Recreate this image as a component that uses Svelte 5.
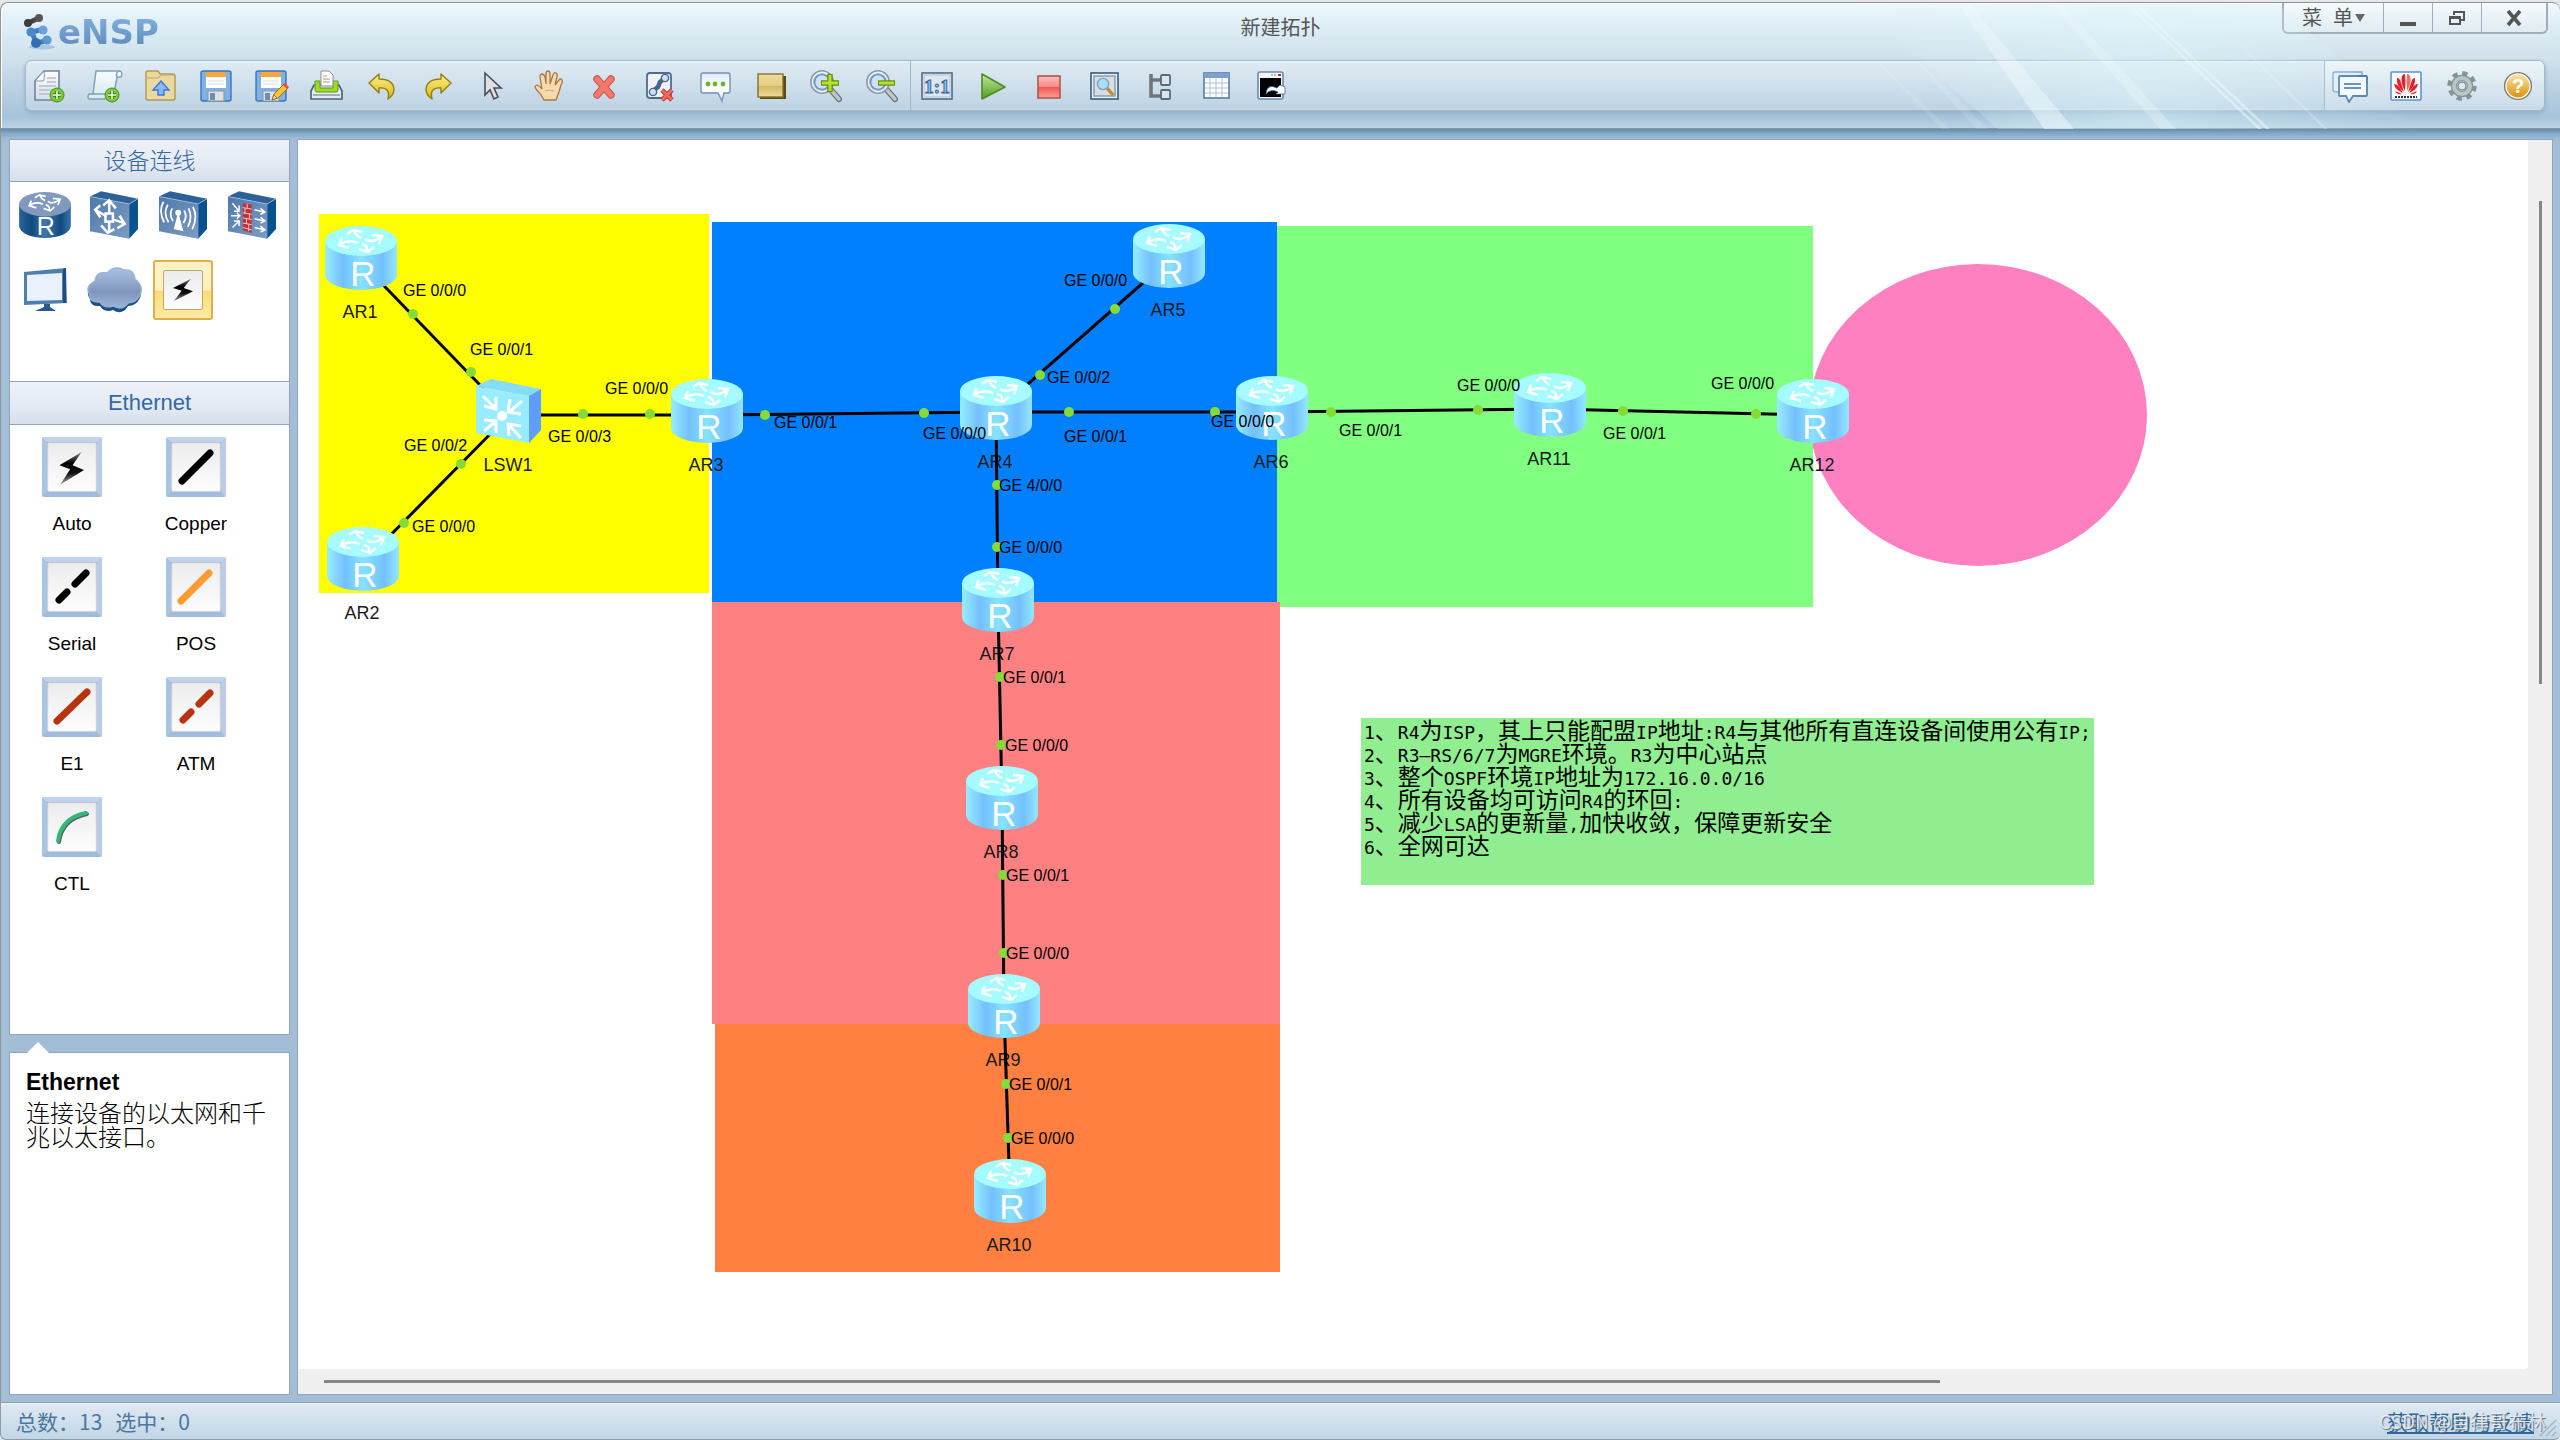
<script>
  const editTools = [
    ['newTopo', '新建拓扑'],
    ['newPaper', '新建试卷'],
    ['open', '打开'],
    ['save', '保存'],
    ['saveAs', '另存为'],
    ['print', '打印'],
    ['undo', '撤销'],
    ['redo', '重做'],
    ['select', '选择'],
    ['hand', '拖动'],
    ['delete', '删除'],
    ['deleteLink', '删除连线'],
    ['comment', '添加描述'],
    ['palette', '添加图形'],
    ['zoomIn', '放大'],
    ['zoomOut', '缩小']
  ];
  const runTools = [
    ['reset', '原始大小'],
    ['start', '启动设备'],
    ['stop', '停止设备'],
    ['capture', '数据抓包'],
    ['tree', '设备树'],
    ['grid', '显示网格'],
    ['console', '打开命令行']
  ];
  const helpTools = [
    ['forum', '论坛'],
    ['huawei', '官网'],
    ['settings', '选项'],
    ['help', '帮助']
  ];

  const devices = [
    ['router', '路由器'],
    ['switch', '交换机'],
    ['wlan', '无线局域网'],
    ['firewall', '防火墙'],
    ['terminal', '终端'],
    ['cloud', '其他设备'],
    ['link', '设备连线']
  ];
  let device = 'link';

  const cables = ['Auto', 'Copper', 'Serial', 'POS', 'E1', 'ATM', 'CTL'];

  // zones painted behind the devices
  const zones = [
    { x: 319, y: 214, w: 390, h: 379, fill: '#ffff00' },
    { x: 712, y: 222, w: 565, h: 380, fill: '#0080ff' },
    { x: 1277, y: 226, w: 536, h: 381, fill: '#80ff80' },
    { x: 712, y: 602, w: 568, h: 422, fill: '#ff8080' },
    { x: 715, y: 1024, w: 565, h: 248, fill: '#ff8040' }
  ];

  const nodes = {
    AR1: [361, 258],
    AR2: [363, 559],
    LSW1: [509, 411],
    AR3: [707, 411],
    AR4: [996, 408],
    AR5: [1169, 256],
    AR6: [1272, 408],
    AR7: [998, 600],
    AR8: [1002, 798],
    AR9: [1004, 1006],
    AR10: [1010, 1191],
    AR11: [1550, 405],
    AR12: [1813, 411]
  };

  // each end: port name, dot x, dot y, label left, label middle
  const links = [
    { a: 'AR1', b: 'LSW1', ends: [['0/0/0', 413, 314, 403, 290], ['0/0/1', 471, 372, 470, 349]] },
    { a: 'AR2', b: 'LSW1', ends: [['0/0/0', 404, 523, 412, 526], ['0/0/2', 461, 464, 404, 445]] },
    { a: 'LSW1', b: 'AR3', ends: [['0/0/3', 583, 414, 548, 436], ['0/0/0', 650, 414, 605, 388]] },
    { a: 'AR3', b: 'AR4', ends: [['0/0/1', 765, 415, 774, 422], ['0/0/0', 924, 413, 923, 433]] },
    { a: 'AR4', b: 'AR5', ends: [['0/0/2', 1040, 375, 1047, 377], ['0/0/0', 1115, 309, 1064, 280]] },
    { a: 'AR4', b: 'AR6', ends: [['0/0/1', 1069, 412, 1064, 436], ['0/0/0', 1215, 412, 1211, 421]] },
    { a: 'AR4', b: 'AR7', ends: [['4/0/0', 997, 485, 999, 485], ['0/0/0', 997, 547, 999, 547]] },
    { a: 'AR6', b: 'AR11', ends: [['0/0/1', 1331, 412, 1339, 430], ['0/0/0', 1478, 410, 1457, 385]] },
    { a: 'AR11', b: 'AR12', ends: [['0/0/1', 1623, 411, 1603, 433], ['0/0/0', 1756, 414, 1711, 383]] },
    { a: 'AR7', b: 'AR8', ends: [['0/0/1', 1000, 677, 1003, 677], ['0/0/0', 1001, 745, 1005, 745]] },
    { a: 'AR8', b: 'AR9', ends: [['0/0/1', 1003, 875, 1006, 875], ['0/0/0', 1004, 953, 1006, 953]] },
    { a: 'AR9', b: 'AR10', ends: [['0/0/1', 1006, 1084, 1009, 1084], ['0/0/0', 1008, 1138, 1011, 1138]] }
  ];

  const notes = [
    '1、R4为ISP，其上只能配盟IP地址:R4与其他所有直连设备间使用公有IP;',
    '2、R3–RS/6/7为MGRE环境。R3为中心站点',
    '3、整个OSPF环境IP地址为172.16.0.0/16',
    '4、所有设备均可访问R4的环回:',
    '5、减少LSA的更新量,加快收敛，保障更新安全',
    '6、全网可达'
  ];

  // latin runs are set in a smaller monospace face
  function runs(line) {
    return line.match(/[\x20-\x7e–]+|[^\x20-\x7e–]+/g);
  }
  function isLatin(text) {
    return /^[\x20-\x7e–]/.test(text);
  }
</script>

{#snippet plus(cx, cy)}
  <circle {cx} {cy} r="7" fill="#7ccb3c" stroke="#3f8f1d" />
  <path d="M{cx - 4} {cy}h8M{cx} {cy - 4}v8" stroke="#2f6f12" stroke-width="3.4" />
  <path d="M{cx - 4} {cy}h8M{cx} {cy - 4}v8" stroke="#f3ffe6" stroke-width="1.6" />
{/snippet}

{#snippet arrows()}
  <g fill="none" stroke="#fff" stroke-width="2.4">
    <path d="M36 12Q31 10 29 5M22 8L28 4L37 6" />
    <path d="M40 13Q46 18 56 11M47 9L57 10L54 18" />
    <path d="M37 18Q43 19 42 25M34 23L43 26L49 21" />
    <path d="M33 17Q24 13 15 18M17 12L14 19L24 22" />
  </g>
{/snippet}

{#snippet floppy()}
  <rect x="3" y="3" width="30" height="30" rx="2" fill="#7fb0e6" stroke="#3f74b4" stroke-width="1.4" />
  <rect x="8" y="4" width="20" height="16" fill="#fff" />
  <rect x="8" y="4" width="20" height="5" fill="#f7a63a" />
  <path d="M10 13h16M10 16h16" stroke="#d5dbe2" />
  <rect x="10" y="23" width="16" height="10" fill="#dfe2e4" stroke="#8a96a3" />
  <rect x="12" y="25" width="5" height="7" fill="#6f8db0" />
{/snippet}

{#snippet lens()}
  <path d="M22 21L31 31" stroke="#6e7378" stroke-width="6" stroke-linecap="round" />
  <path d="M22 21L31 31" stroke="#c3c6c9" stroke-width="3.4" stroke-linecap="round" />
  <circle cx="14" cy="14" r="10" fill="#dceaf6" stroke="#8e9ba8" stroke-width="4" />
  <circle cx="14" cy="14" r="9.6" fill="none" stroke="#eef2f5" stroke-width="1.6" />
  <circle cx="14" cy="14" r="7.4" fill="#cfe2f4" stroke="#5b94d0" stroke-width="1.4" />
{/snippet}

{#snippet toolIcon(name)}
  <svg width="36" height="36" viewBox="0 0 36 36" aria-hidden="true">
    {#if name === 'newTopo'}
      <path d="M13 3H28V32H4V13Z" fill="url(#paper)" stroke="#6d83a3" stroke-width="1.6" />
      <path d="M13 3Q14 11 12 13Q9 13 4 13Z" fill="#fafafa" stroke="#8191a6" />
      <path d="M16 10h9M16 14h9M8 18h17M8 22h14M8 26h10" stroke="#b3bfd0" stroke-width="1.6" />
      {@render plus(26, 27)}
    {:else if name === 'newPaper'}
      <path d="M9 3H33Q36 4 34 9H30L26 31H2Q0 29 2 26H6Z" fill="url(#paper2)" stroke="#7fa3b8" stroke-width="1.5" />
      <path d="M30 9Q28 4 33 3M6 26H19" fill="none" stroke="#7fa3b8" stroke-width="1.5" />
      {@render plus(25, 27)}
    {:else if name === 'open'}
      <path d="M4 5Q4 3 6 3H16L18 6H31Q33 6 33 8V30Q33 32 31 32H6Q4 32 4 30Z" fill="#e9d9a0" stroke="#b49a4f" stroke-width="1.4" />
      <path d="M5 10H16L19 7H32" fill="none" stroke="#c6ad63" />
      <path d="M19 13L27 22H22V27H16V22H11Z" fill="#8ab8fa" stroke="#3e77d6" stroke-width="1.4" />
    {:else if name === 'save'}
      {@render floppy()}
    {:else if name === 'saveAs'}
      {@render floppy()}
      <path d="M19 32L21 26L31 16L35 20L25 30Z" fill="#f8c52e" stroke="#a36d17" />
      <path d="M30 17L32 15L36 19L34 21Z" fill="#e4503c" />
      <path d="M19 32L21 27L24 30Z" fill="#f4ddc0" stroke="#7a4f22" stroke-width="0.6" />
    {:else if name === 'print'}
      <path d="M5 17H30L33 23V31H2V23Z" fill="#e6eaec" stroke="#4f6278" stroke-width="1.7" />
      <path d="M6 13H11V20H24V13H29V22Q29 24 27 24H8Q6 24 6 22Z" fill="#9adb2c" stroke="#5c9a14" />
      <path d="M12 3H20L24 7V18H12Z" fill="#fff" stroke="#8d8d8d" />
      <path d="M14 8h4M14 11h7M14 14h7" stroke="#999" />
      <path d="M4 27h27" stroke="#8fa0b0" stroke-width="1.6" />
    {:else if name === 'undo' || name === 'redo'}
      <path
        d="M5 15L15 6V11Q29 11 30 21Q30 27 24 31Q27 19 15 20V25Z"
        fill="url(#gold)"
        stroke="#93800c"
        stroke-width="1.4"
        stroke-linejoin="round"
        transform={name === 'redo' ? 'translate(36 0) scale(-1 1)' : null}
      />
    {:else if name === 'select'}
      <path d="M10 5V27L15 22L19 31L23 29L19 20H26Z" fill="#dfe1e4" stroke="#4b4f55" stroke-width="1.6" />
    {:else if name === 'hand'}
      <path
        d="M13 32Q10 26 5 21Q3 18 6 17Q9 18 11 21L9 9Q9 6 11 6Q13 6 14 9L15 16V6Q15 3 17 3Q19 3 19 6V16L22 7Q23 4 25 5Q27 6 26 9L24 17L28 12Q30 10 31 12Q32 14 30 17Q28 25 25 32Z"
        fill="#f8d9ae"
        stroke="#a97a40"
        stroke-width="1.3"
      />
      <path d="M14 23Q18 21 23 23" fill="none" stroke="#d8a86e" />
    {:else if name === 'delete'}
      <path d="M11 11L25 27M25 11L11 27" stroke="#c9574f" stroke-width="7.4" stroke-linecap="round" />
      <path d="M11 11L25 27M25 11L11 27" stroke="#f4776b" stroke-width="5.4" stroke-linecap="round" />
    {:else if name === 'deleteLink'}
      <rect x="5" y="5" width="24" height="25" rx="3" fill="#eef2f6" stroke="#4f6b92" stroke-width="1.8" />
      <path d="M11 23L16 19L18 14L23 10" fill="none" stroke="#46648f" stroke-width="4.6" stroke-linejoin="round" />
      <circle cx="11" cy="24" r="3.6" fill="#cfe0f4" stroke="#46648f" stroke-width="1.4" />
      <circle cx="23" cy="10" r="3.6" fill="#cfe0f4" stroke="#46648f" stroke-width="1.4" />
      <path d="M20 22L30 32M30 22L20 32" stroke="#c63a30" stroke-width="4.6" />
      <path d="M20 22L30 32M30 22L20 32" stroke="#f06a5e" stroke-width="2.6" />
    {:else if name === 'comment'}
      <path d="M6 5H31Q33 5 33 7V23Q33 25 31 25H27L25 33L21 25H6Q4 25 4 23V7Q4 5 6 5Z" fill="url(#bubble)" stroke="#7691b8" stroke-width="1.4" />
      <g fill="#6fb42c"><circle cx="11" cy="16" r="2.4" /><circle cx="18" cy="16" r="2.4" /><circle cx="26" cy="16" r="2.4" /></g>
    {:else if name === 'palette'}
      <path d="M7 8H33V31H7Z" fill="#5c4a14" />
      <rect x="5" y="6" width="25" height="23" fill="url(#sand)" stroke="#84702d" stroke-width="1.4" />
    {:else if name === 'zoomIn' || name === 'zoomOut'}
      {@render lens()}
      {#if name === 'zoomIn'}
        <path d="M13 15H31M22 6V24" stroke="#5d8e0c" stroke-width="5.4" />
        <path d="M14 15H30M22 7V23" stroke="#b9e227" stroke-width="3" />
      {:else}
        <path d="M14 15H31" stroke="#5d8e0c" stroke-width="5.4" />
        <path d="M15 15H30" stroke="#b9e227" stroke-width="3" />
      {/if}
    {:else if name === 'reset'}
      <rect x="3" y="5" width="30" height="26" fill="#f2f5f8" stroke="#4d6a8b" stroke-width="1.6" />
      <rect x="5" y="7" width="26" height="22" fill="#dfe7ee" stroke="#a9bacb" />
      <text x="18" y="25" class="one">1:1</text>
    {:else if name === 'start'}
      <path d="M7 6L30 19L7 31Z" fill="url(#play)" stroke="#4f8b22" stroke-width="1.6" stroke-linejoin="round" />
    {:else if name === 'stop'}
      <rect x="7" y="8" width="22" height="22" fill="url(#stop)" stroke="#b5544f" stroke-width="1.6" />
    {:else if name === 'capture'}
      <rect x="5" y="5" width="27" height="26" fill="#eaf1f7" stroke="#4b6a8d" stroke-width="1.8" />
      <rect x="8" y="8" width="21" height="20" fill="#d9dee2" stroke="#8497aa" stroke-width="1.4" />
      <path d="M21 20L27 27" stroke="#c78a2a" stroke-width="3.4" />
      <circle cx="17" cy="16" r="5.6" fill="#a9dcf8" stroke="#7aa3c0" stroke-width="1.4" />
    {:else if name === 'tree'}
      <path d="M9 6V28H19M9 12H19" fill="none" stroke="#6f767d" stroke-width="3.6" />
      <rect x="19" y="7" width="9" height="10" rx="1" fill="#dbe5ee" stroke="#5a6b7d" stroke-width="1.8" />
      <rect x="19" y="22" width="9" height="9" rx="1" fill="#dbe5ee" stroke="#5a6b7d" stroke-width="1.8" />
    {:else if name === 'grid'}
      <rect x="6" y="5" width="25" height="25" fill="#fff" stroke="#5a7ba6" stroke-width="1.6" />
      <rect x="6" y="5" width="25" height="5" fill="#7da0d0" />
      <path d="M7 15H30M7 20H30M7 25H30M12 10V29M18 10V29M24 10V29" stroke="#a9bedb" />
    {:else if name === 'console'}
      <rect x="4" y="4" width="25" height="27" rx="2" fill="#f2f5f8" stroke="#6a89ad" stroke-width="1.6" />
      <rect x="6" y="10" width="21" height="19" fill="#000" />
      <path d="M17 7h2M20 7h2" stroke="#6a89ad" /><path d="M24 7h3" stroke="#d22" stroke-width="2" />
      <path d="M12 26Q13 15 23 20L26 17L31 19V26H22L24 24Q17 20 12 26Z" fill="#fff" stroke="#3f6c9e" stroke-width="0.8" />
    {:else if name === 'forum'}
      <path d="M3 4H30V8H8V24H5Q1 24 1 22V6Q1 4 3 4Z" fill="#e3eff8" stroke="#7fa4c6" stroke-width="1.4" />
      <path d="M8 8H34Q35 8 35 9V27Q35 28 34 28H21L17 34L14 28H8Q7 28 7 27V9Q7 8 8 8Z" fill="#f5fafe" stroke="#4d7aa8" stroke-width="1.8" />
      <path d="M12 16H29M12 20H29" stroke="#5d87b3" stroke-width="1.8" />
    {:else if name === 'huawei'}
      <rect x="3" y="4" width="30" height="28" rx="1" fill="#fff" stroke="#5b93d2" stroke-width="1.6" />
      <g fill="#e2202c">
        <path d="M17 23Q12 15 14 8Q15 6 17 6Q18 14 17 23Z" />
        <path d="M19 23Q24 15 22 8Q21 6 19 6Q18 14 19 23Z" fill="#f0705e" />
        <path d="M16 24Q8 18 9 10Q12 10 13 15Z" />
        <path d="M20 24Q28 18 27 10Q24 10 23 15Z" />
        <path d="M15 25Q7 22 6 16Q9 16 12 20Z" />
        <path d="M21 25Q29 22 30 16Q27 16 24 20Z" />
        <path d="M14 26Q9 27 7 23ZM22 26Q27 27 29 23Z" />
      </g>
      <path d="M7 29H29" stroke="#333" stroke-width="2" stroke-dasharray="2 1" />
    {:else if name === 'settings'}
      <circle cx="18" cy="18" r="12" fill="none" stroke="#849497" stroke-width="5.4" stroke-dasharray="5 4.4" />
      <circle cx="18" cy="18" r="8" fill="none" stroke="#849497" stroke-width="6.4" />
      <circle cx="18" cy="18" r="8" fill="none" stroke="#b9c6c8" stroke-width="4" />
      <circle cx="18" cy="18" r="4" fill="#dbe8f0" stroke="#6f8083" />
    {:else if name === 'help'}
      <circle cx="18" cy="18" r="13.4" fill="#fff" stroke="#857b68" stroke-width="1.4" />
      <circle cx="18" cy="18" r="11.4" fill="url(#helpFill)" />
      <text x="18" y="25" class="question">?</text>
    {/if}
  </svg>
{/snippet}

{#snippet box()}
  <path d="M15 0L65 10L53 17L0 7Z" fill="#2d6199" />
  <path d="M65 10V51L53 64V17Z" fill="#07528f" />
  <path d="M0 7L53 17V64L0 54Z" fill="url(#boxFront)" />
  <path d="M0 7L53 17L65 10" fill="none" stroke="#a9c3dd" />
{/snippet}

{#snippet bolt()}
  <path d="M30 3L3 17L16 21L4 37L33 22L19 17Z" fill="url(#boltFill)" />
{/snippet}

{#snippet deviceIcon(name)}
  {#if name === 'router'}
    <svg width="52" height="46" viewBox="0 0 72 64" aria-hidden="true">
      <path d="M0 17V47A36 17 0 0 0 72 47V17Z" fill="url(#routerDark)" />
      <ellipse cx="36" cy="17" rx="36" ry="17" fill="#8199bd" />
      {@render arrows()}
      <text x="37" y="60" class="r">R</text>
    </svg>
  {:else if name === 'terminal'}
    <svg width="46" height="44" viewBox="0 0 46 44" aria-hidden="true">
      <path d="M2 4L44 0L45 35L2 37Z" fill="#4f7dae" />
      <path d="M41 1L44 0V35L41 35Z" fill="#1d4d82" />
      <path d="M5 7L40 5V32L5 33Z" fill="#e8f1fc" />
      <path d="M22 36H28V39L34 43H13L22 39Z" fill="#28588c" />
    </svg>
  {:else if name === 'cloud'}
    <svg width="56" height="46" viewBox="0 0 56 46" aria-hidden="true">
      <path d="M9 17Q10 7 21 9Q29 1 38 6Q48 5 49 15Q58 22 54 31Q50 39 42 39Q36 49 27 43Q18 46 14 39Q4 40 4 32Q-2 23 9 17Z" fill="#1f4f86" />
      <path d="M9 14Q10 4 21 6Q29 -2 38 3Q48 2 49 12Q58 19 54 28Q50 36 42 36Q36 44 27 39Q18 42 14 35Q4 36 4 28Q-2 20 9 14Z" fill="url(#cloudFill)" stroke="#8fb4da" stroke-width="1.4" />
    </svg>
  {:else if name === 'link'}
    <span class="frame small">
      <svg width="24" height="30" viewBox="0 0 36 40" aria-hidden="true">{@render bolt()}</svg>
    </span>
  {:else}
    <svg width="48" height="48" viewBox="0 0 65 64" aria-hidden="true">
      {@render box()}
      {#if name === 'switch'}
        <g fill="none" stroke="#fff" stroke-width="3.4">
          <rect x="21" y="30" width="10" height="11" />
          <path d="M26 30V14M18 19L26 12L35 23M26 41V55M15 46L24 56L33 51M21 33L7 25M14 19L7 25L14 35M31 38L46 43M40 33L47 44L37 50" />
        </g>
      {:else if name === 'wlan'}
        <g fill="none" stroke="#fff" stroke-width="2.4">
          <path d="M18 23Q13 31 19 40M12 18Q5 29 13 42M6 14Q-1 27 7 42M34 26Q39 34 33 43M40 23Q46 35 39 48M46 21Q53 35 45 51" />
        </g>
        <path d="M26 28L33 54L20 51Z" fill="#fff" />
        <circle cx="26" cy="29" r="4" fill="#fff" />
      {:else}
        <path d="M20 16L32 18V56L20 53Z" fill="#c62f36" />
        <path d="M20 22L32 24M20 29L32 31M20 36L32 38M20 43L32 45M20 49L32 52M26 17V23M23 23V30M29 30V37M25 37V44M28 45V54" stroke="#f3dede" stroke-width="1.2" />
        <path d="M6 16L14 26M15 19V27H8M4 33H16M12 29L16 33L12 37M6 49L15 40M8 40H15V47" fill="none" stroke="#fff" stroke-width="2" />
        <path d="M36 25L49 28M44 23L50 28L44 31M36 37L49 40M44 35L50 40L44 43M36 49L49 52M44 47L50 52L44 55" fill="none" stroke="#fff" stroke-width="2" />
      {/if}
    </svg>
  {/if}
{/snippet}

{#snippet cableIcon(name)}
  <svg width="50" height="50" viewBox="0 0 50 50" aria-hidden="true">
    {#if name === 'Auto'}
      <g transform="translate(10 7) scale(0.82 0.96)">{@render bolt()}</g>
    {:else if name === 'Copper'}
      <path d="M11 39L39 11" class="cable" stroke="#000" />
    {:else if name === 'Serial'}
      <path d="M12 38L20 30M28 22L39 11" class="cable" stroke="#000" />
    {:else if name === 'POS'}
      <path d="M10 39L38 11" class="cable" stroke="#ff9a30" />
    {:else if name === 'E1'}
      <path d="M10 39L40 10" class="cable" stroke="#b8330f" />
    {:else if name === 'ATM'}
      <path d="M12 38L20 30M28 22L39 11" class="cable" stroke="#b8330f" />
    {:else}
      <path d="M12 40Q15 17 40 12" fill="none" stroke="#5d5d5d" stroke-width="4" stroke-linecap="round" />
      <path d="M11 39Q14 16 39 11" fill="none" stroke="#31b878" stroke-width="4" stroke-linecap="round" />
    {/if}
  </svg>
{/snippet}

<svg class="defs" width="0" height="0" aria-hidden="true">
  <defs>
    <linearGradient id="paper" x2="0" y2="1"><stop stop-color="#fdfdfe" /><stop offset="1" stop-color="#d6dde7" /></linearGradient>
    <linearGradient id="paper2" x2="0" y2="1"><stop stop-color="#f7fcff" /><stop offset="1" stop-color="#d6e9f2" /></linearGradient>
    <linearGradient id="gold" x2="0" y2="1"><stop stop-color="#fbf18f" /><stop offset="1" stop-color="#dcb60c" /></linearGradient>
    <linearGradient id="bubble" x2="0" y2="1"><stop stop-color="#dbe9fb" /><stop offset="0.5" stop-color="#fff" /><stop offset="1" stop-color="#dfe9f5" /></linearGradient>
    <linearGradient id="sand" x2="0" y2="1"><stop stop-color="#f0dc9c" /><stop offset="0.5" stop-color="#e4cd83" /><stop offset="0.51" stop-color="#d3b75f" /><stop offset="1" stop-color="#efdc9f" /></linearGradient>
    <linearGradient id="play" x2="0" y2="1"><stop stop-color="#c6e6a2" /><stop offset="1" stop-color="#4ea01c" /></linearGradient>
    <linearGradient id="stop" x2="0" y2="1"><stop stop-color="#f9bdb8" /><stop offset="0.5" stop-color="#f58c85" /><stop offset="0.51" stop-color="#f0594f" /><stop offset="1" stop-color="#f8a098" /></linearGradient>
    <linearGradient id="helpFill" x2="0" y2="1"><stop stop-color="#fbe3a4" /><stop offset="1" stop-color="#d8940c" /></linearGradient>
    <linearGradient id="boxFront" x2="1" y2="1"><stop stop-color="#4f79ab" /><stop offset="1" stop-color="#7c9bc2" /></linearGradient>
    <linearGradient id="routerDark"><stop stop-color="#2a6498" /><stop offset="0.25" stop-color="#0f4a80" /><stop offset="0.5" stop-color="#3f78ab" /><stop offset="0.8" stop-color="#0f4a80" /><stop offset="1" stop-color="#3b74a7" /></linearGradient>
    <linearGradient id="routerLight"><stop stop-color="#97edff" /><stop offset="0.25" stop-color="#74bfff" /><stop offset="0.5" stop-color="#86e3ff" /><stop offset="0.8" stop-color="#74bfff" /><stop offset="1" stop-color="#93e8ff" /></linearGradient>
    <linearGradient id="cloudFill" x2="0" y2="1"><stop stop-color="#a9c3e4" /><stop offset="0.6" stop-color="#8095bc" /><stop offset="1" stop-color="#9db4d6" /></linearGradient>
    <linearGradient id="boltFill" x2="0" y2="1"><stop stop-color="#8a8a7c" /><stop offset="0.35" stop-color="#000" /><stop offset="0.65" stop-color="#111" /><stop offset="1" stop-color="#a5a59c" /></linearGradient>
    <linearGradient id="ray" x2="0" y2="1"><stop stop-color="#fff" stop-opacity="0.2" /><stop offset="1" stop-color="#f0fcff" stop-opacity="0.5" /></linearGradient>
    <linearGradient id="haze"><stop stop-color="#dcf5fa" stop-opacity="0" /><stop offset="0.5" stop-color="#dcf5fa" stop-opacity="0.5" /><stop offset="1" stop-color="#dcf5fa" stop-opacity="0" /></linearGradient>
  </defs>
</svg>

<div class="window">
  <header>
    <svg class="glare" width="700" height="125" viewBox="0 0 700 125" aria-hidden="true">
      <path d="M0 0H420L560 125H140Z" fill="url(#haze)" />
      <path d="M100 0L112 0L216 125H186Z" fill="url(#ray)" />
      <path d="M194 0L204 0L318 125H302Z" fill="url(#ray)" opacity="0.6" />
      <path d="M268 0L271 0L404 125H400ZM276 0L279 0L412 125H408Z" fill="url(#ray)" />
      <path d="M380 40L382 40L470 125H466Z" fill="url(#ray)" opacity="0.5" />
      <path d="M60 60L64 60L130 125H118ZM20 60L22 60L92 125H84Z" fill="#fff" opacity="0.12" />
    </svg>
    <div class="titlebar">
      <div class="brand">
        <svg width="32" height="36" viewBox="0 0 32 36" aria-hidden="true">
          <ellipse cx="18" cy="33" rx="13" ry="2.4" fill="#8fb4d6" opacity="0.6" />
          <path d="M4 9L15 4" stroke="#444" stroke-width="5" />
          <circle cx="4" cy="9" r="4" fill="#3d3d3d" /><circle cx="15" cy="4" r="4" fill="#555" />
          <path d="M20 15L8 18L12 29L22 27" fill="none" stroke="#3f7cc0" stroke-width="5" />
          <circle cx="19" cy="16" r="4.6" fill="#6aa0db" /><circle cx="7" cy="18" r="4.6" fill="#4b87c9" />
          <circle cx="12" cy="29" r="5" fill="#2f6fb5" /><circle cx="23" cy="26" r="4.6" fill="#5c97d6" />
        </svg>
        <span class="wordmark">eNSP</span>
      </div>
      <h1>新建拓扑</h1>
      <div class="winbuttons">
        <button class="menu">菜&nbsp; 单<svg width="10" height="8" viewBox="0 0 10 8" aria-hidden="true"><path d="M0 0H10L5 8Z" fill="#666" /></svg></button>
        <button aria-label="最小化"><svg width="16" height="20" viewBox="0 0 16 20"><path d="M0 16H16" stroke="#555" stroke-width="4" /></svg></button>
        <button aria-label="还原"><svg width="18" height="18" viewBox="0 0 18 18"><path d="M6 6V3H16V11H12M5 3H17M2 8H12V15H2ZM1 9H13" fill="none" stroke="#555" stroke-width="2" /></svg></button>
        <button class="close" aria-label="关闭"><svg width="18" height="18" viewBox="0 0 18 18"><path d="M3 2L15 16M15 2L3 16" stroke="#555" stroke-width="3.6" /></svg></button>
      </div>
    </div>
    <div class="toolbar">
      <div class="tools edit">
        {#each editTools as [name, label]}
          <button aria-label={label}>{@render toolIcon(name)}</button>
        {/each}
      </div>
      <div class="tools run">
        {#each runTools as [name, label]}
          <button aria-label={label}>{@render toolIcon(name)}</button>
        {/each}
      </div>
      <div class="tools aid">
        {#each helpTools as [name, label]}
          <button aria-label={label}>{@render toolIcon(name)}</button>
        {/each}
      </div>
    </div>
  </header>

  <main>
    <aside>
      <section class="panel library">
        <h2>设备连线</h2>
        <div class="devices">
          {#each devices as [name, label]}
            <button class:active={device === name} aria-label={label} on:click={() => (device = name)}>
              {@render deviceIcon(name)}
            </button>
          {/each}
        </div>
        <h2 class="sub">Ethernet</h2>
        <div class="cables">
          {#each cables as name}
            <button>
              <span class="frame">{@render cableIcon(name)}</span>
              {name}
            </button>
          {/each}
        </div>
      </section>
      <section class="panel detail">
        <h3>Ethernet</h3>
        <p>连接设备的以太网和千兆以太接口。</p>
      </section>
    </aside>

    <div class="workspace">
      <div class="canvas">
        <svg width="2200" height="1200" viewBox="298 140 2200 1200">
          <ellipse cx="1978" cy="415" rx="169" ry="151" fill="#ff80c0" />
          {#each zones as z}
            <rect x={z.x} y={z.y} width={z.w} height={z.h} fill={z.fill} />
          {/each}
          {#each Object.entries(nodes) as [name, [x, y]]}
            <text x={x - 1} y={y + 60} class="name">{name}</text>
          {/each}
          {#each links as { a, b, ends }}
            <line x1={nodes[a][0]} y1={nodes[a][1] + 4} x2={nodes[b][0]} y2={nodes[b][1] + 4} stroke="#000" stroke-width="3" />
            {#each ends as [, x, y]}
              <circle cx={x} cy={y} r="5" fill="#85dc36" />
            {/each}
          {/each}
          {#each Object.entries(nodes) as [name, [x, y]]}
            {#if name.startsWith('LSW')}
              <g transform="translate({x - 33} {y - 32})">
                <path d="M15 0L65 10L53 17L0 7Z" fill="#86dcff" />
                <path d="M65 10V51L53 64V17Z" fill="#5f9dff" />
                <path d="M0 7L53 17V64L0 54Z" fill="#98ecff" />
                <g fill="none" stroke="#fff" stroke-width="3">
                  <path d="M7 17L19 29M20 18V30L8 27M46 22L33 33M34 20L32 33L45 35M8 52L19 43M8 41L20 42V54M45 59L33 46M33 57L32 45L45 47" />
                </g>
                <ellipse cx="26" cy="37" rx="5" ry="5" fill="#fff" />
              </g>
            {:else}
              <g transform="translate({x - 36} {y - 32})">
                <path d="M0 15V49A36 15 0 0 0 72 49V15Z" fill="url(#routerLight)" />
                <ellipse cx="36" cy="15" rx="36" ry="15" fill="#a5fbff" />
                {@render arrows()}
                <text x="38" y="60" class="r">R</text>
              </g>
            {/if}
          {/each}
          {#each links as { ends }}
            {#each ends as [port, , , x, y]}
              <text {x} y={y + 6} class="port">GE {port}</text>
            {/each}
          {/each}
        </svg>
        <div class="note">
          {#each notes as line}
            <div>{#each runs(line) as text}<span class:latin={isLatin(text)}>{text}</span>{/each}</div>
          {/each}
        </div>
      </div>
      <div class="vbar"><div class="thumb"></div></div>
      <div class="hbar"><div class="thumb"></div></div>
    </div>
  </main>

  <footer>
    <span>总数：13</span>
    <span>选中：0</span>
    <a href="#help">获取帮助与反馈</a>
    <span class="watermark">CSDN @自律哥布林</span>
    <svg class="grip" width="18" height="18" viewBox="0 0 18 18" aria-hidden="true">
      <path d="M1 17L17 1M7 17L17 7M13 17L17 13" stroke="#a3b3c2" stroke-width="1.4" />
    </svg>
  </footer>
</div>

<style>
  :global(body) {
    margin: 0;
    background: #e6e6e6;
  }
  .window {
    display: flex;
    flex-direction: column;
    box-sizing: border-box;
    min-height: 100vh;
    padding-top: 2px;
    font-family: "Liberation Sans", "Noto Sans CJK SC", sans-serif;
    color: #000;
  }
  .defs {
    position: absolute;
  }
  button {
    display: flex;
    align-items: center;
    justify-content: center;
    padding: 0;
    border: 0;
    background: none;
    color: inherit;
    font: inherit;
    cursor: pointer;
  }
  h1,
  h2,
  h3,
  p {
    margin: 0;
    font-weight: 400;
  }

  header {
    position: relative;
    padding: 0 15px 17px;
    border: solid #8f9498;
    border-width: 1px 0 1px 1px;
    border-radius: 8px 8px 0 0;
    background: linear-gradient(#eef9fd, #e2f0f7 16px, #cfe1ec 56px, #b3cbdf 96px, #a6c3db 114px, #bcd3e3);
    box-shadow: inset 1px 1px 0 #fff;
  }
  .glare {
    position: absolute;
    top: 1px;
    right: 2px;
    pointer-events: none;
  }
  .titlebar {
    display: grid;
    grid-template-columns: 1fr auto 1fr;
    height: 57px;
  }
  .brand {
    display: flex;
    align-items: center;
    gap: 2px;
    padding-left: 8px;
  }
  .wordmark {
    font: bold 34px/40px "DejaVu Sans", sans-serif;
    background: linear-gradient(#86b4e0, #5a86b8);
    background-clip: text;
    color: transparent;
  }
  h1 {
    padding-top: 11px;
    font-size: 20px;
    line-height: 28px;
    color: #555;
  }
  .winbuttons {
    display: flex;
    justify-self: end;
    height: 31px;
    box-sizing: border-box;
    margin-right: -3px;
    border: 2px solid #a2adb5;
    border-top: 0;
    border-radius: 0 0 6px 6px;
    background: linear-gradient(#f6fafc, #dfebf3);
  }
  .winbuttons button {
    width: 49px;
    border-right: 1px solid #a2adb5;
  }
  .winbuttons .menu {
    width: 100px;
    font-size: 20px;
    line-height: 28px;
    color: #555;
  }
  .winbuttons .menu svg {
    margin-left: 2px;
  }
  .winbuttons .close {
    width: 64px;
    border-right: 0;
  }

  .toolbar {
    display: flex;
    box-sizing: border-box;
    height: 51px;
    margin-left: 9px;
    border: 1px solid #a2b8ca;
    border-radius: 7px;
    background: linear-gradient(rgba(235, 243, 248, 0.6), rgba(205, 222, 235, 0.5));
    box-shadow: inset 0 1px 0 #eef5f9, inset 0 -2px 0 #c5d7e5, 0 2px 4px #90abc4;
  }
  .tools {
    display: flex;
    align-items: center;
    justify-content: space-between;
    box-sizing: border-box;
  }
  .edit {
    width: 885px;
    padding: 0 10px 0 5px;
    border-right: 1px solid #9fb4c6;
  }
  .run {
    width: 388px;
    padding: 0 9px 0 8px;
  }
  .aid {
    width: 220px;
    margin-left: auto;
    padding: 0 8px 0 7px;
    border-left: 1px solid #9fb4c6;
    border-radius: 0 6px 6px 0;
    background: linear-gradient(#eef5f9, #c9dae8);
  }
  .one {
    font: bold 19px "Liberation Serif", serif;
    text-anchor: middle;
    fill: #9cc4ec;
    stroke: #33669e;
  }
  .question {
    font: bold 20px "Liberation Sans", sans-serif;
    text-anchor: middle;
    fill: #fff;
  }

  main {
    flex: 1;
    display: flex;
    gap: 7px;
    min-height: 0;
    padding: 10px 7px 7px 8px;
    border-left: 1px solid #8f9498;
    background: linear-gradient(#5f8db0, #7fa6c4 4px, #a3bdd6 10px);
  }
  aside {
    display: flex;
    flex-direction: column;
    gap: 17px;
    width: 281px;
  }
  .panel {
    box-sizing: border-box;
    border: 1px solid #8ea6c0;
    background: #fff;
  }
  .library {
    flex: 1;
  }
  h2 {
    box-sizing: border-box;
    height: 42px;
    border-bottom: 1px solid #8ea6c0;
    background: linear-gradient(#edf1f9, #e3eaf3 60%, #d5e0ea);
    font-family: "Noto Sans CJK SC", sans-serif;
    font-size: 23px;
    line-height: 38px;
    font-weight: 300;
    text-align: center;
    color: #3468a2;
  }
  .sub {
    border-top: 1px solid #8ea6c0;
    height: 44px;
    font: 22px/42px "Liberation Sans", sans-serif;
  }
  .devices {
    display: grid;
    grid-template-columns: repeat(4, 69px);
    grid-auto-rows: 60px;
    justify-items: center;
    row-gap: 15px;
    height: 199px;
    box-sizing: border-box;
    padding-top: 3px;
  }
  .devices button {
    box-sizing: border-box;
    width: 60px;
    height: 60px;
  }
  .devices .active {
    border: 2px solid #dcb04a;
    border-radius: 3px;
    background: linear-gradient(#fff1c4 50%, #fddc76 52%, #fdeaa4);
  }
  .frame {
    display: flex;
    align-items: center;
    justify-content: center;
    box-sizing: border-box;
    width: 60px;
    height: 60px;
    border: 5px solid;
    border-color: #bed3ee #b7cce8 #a1bddd #a8c4e5;
    border-radius: 2px;
    background: linear-gradient(#ececee, #fdfdfd);
    box-shadow: inset 0 0 2px #666;
  }
  .frame.small {
    width: 40px;
    height: 40px;
    border: 1px solid #c8a860;
    box-shadow: none;
  }
  .cables {
    display: grid;
    grid-template-columns: repeat(2, 124px);
    justify-items: center;
    row-gap: 21px;
    padding-top: 12px;
    font-size: 19px;
    line-height: 24px;
  }
  .cables button {
    flex-direction: column;
    gap: 15px;
  }
  .cable {
    stroke-width: 7;
    stroke-linecap: round;
  }
  .detail {
    position: relative;
    height: 343px;
    padding: 16px;
  }
  .detail::before {
    content: "";
    position: absolute;
    left: 17px;
    top: -11px;
    border: 11px solid transparent;
    border-top: 0;
    border-bottom-color: #fff;
  }
  h3 {
    margin-bottom: 5px;
    font-size: 23px;
    line-height: 26px;
    font-weight: 700;
  }
  .detail p {
    font-family: "Noto Sans CJK SC", sans-serif;
    font-size: 24px;
    line-height: 24px;
    font-weight: 300;
  }

  .workspace {
    flex: 1;
    display: grid;
    grid-template-columns: minmax(0, 1fr) 24px;
    grid-template-rows: minmax(0, 1fr) 25px;
    min-width: 0;
    border: 1px solid #8ea6c0;
    background: #efefef;
  }
  .canvas {
    position: relative;
    overflow: hidden;
    background: #fff;
    border-bottom-right-radius: 3px;
  }
  .canvas > svg {
    display: block;
  }
  .name {
    font-size: 18px;
    text-anchor: middle;
    fill: #1a1a1a;
  }
  .port {
    font-size: 16px;
  }
  .r {
    font: 35px "Liberation Sans", sans-serif;
    text-anchor: middle;
    fill: #fff;
  }
  .note {
    position: absolute;
    left: 1063px;
    top: 578px;
    box-sizing: border-box;
    width: 733px;
    height: 167px;
    padding-left: 3px;
    background: #90ee90;
    font-family: "Noto Sans CJK SC", sans-serif;
    font-size: 23px;
    line-height: 23px;
    white-space: nowrap;
  }
  .latin {
    font-family: "DejaVu Sans Mono", monospace;
    font-size: 18px;
    line-height: 0;
  }
  .vbar {
    padding: 61px 0 0 11px;
  }
  .vbar .thumb {
    width: 3px;
    height: 483px;
    background: #868686;
  }
  .hbar {
    padding: 11px 0 0 26px;
  }
  .hbar .thumb {
    width: 1616px;
    height: 3px;
    background: #868686;
  }

  footer {
    position: relative;
    display: flex;
    align-items: center;
    gap: 13px;
    box-sizing: border-box;
    height: 38px;
    padding: 0 26px 0 15px;
    border: solid #8f9da9;
    border-width: 1px 0 1px 1px;
    border-radius: 0 0 6px 6px;
    background: linear-gradient(#dfeaf3, #c1d6e6);
    box-shadow: inset 0 1px 0 #eef4f8;
    font-family: "Noto Sans CJK SC", sans-serif;
    font-size: 21px;
    line-height: 30px;
    color: #4a789f;
  }
  footer a {
    margin-left: auto;
    color: #2f6898;
  }
  .watermark {
    position: absolute;
    right: 14px;
    font-size: 19px;
    color: rgba(240, 245, 249, 0.85);
    text-shadow: 1px 1px 1px #5d6f80;
  }
  .grip {
    position: absolute;
    right: 3px;
    bottom: 2px;
  }
</style>
